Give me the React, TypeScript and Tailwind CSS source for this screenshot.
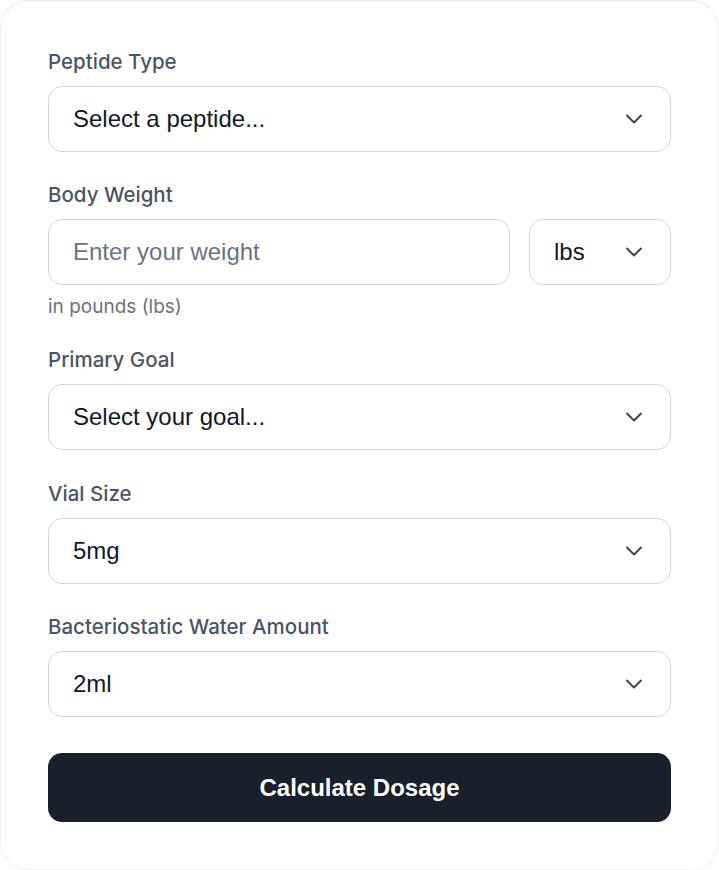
import { ChevronDown } from "lucide-react";

const LABEL = "block text-[20.5px] leading-6 font-medium text-[#4b5563] font-['Inter',sans-serif] mb-3";
const BOX = "flex h-[66px] items-center rounded-[14px] border border-[#d1d5db] bg-white pl-6 pr-[22px] text-[24px] font-['Liberation_Sans',Arial,sans-serif]";

function SelectBox ({ value, className = "" }: { value: string; className?: string }) {
    return (
        <div className={`${BOX} ${className}`}>
            <span className="flex-1 text-[#111827]">{value}</span>
            <ChevronDown size={28} strokeWidth={1.6} className="text-[#374151]" />
        </div>
    );
}

export default function App () {
    return (
        <div className="min-h-[870px] w-full bg-white">
            <div className="flex min-h-[870px] flex-col rounded-[28px] border border-[#f0f0f0] border-t-[#e5e7eb] bg-white px-[47px] pt-[49px]">
                <label className={LABEL}>Peptide Type</label>
                <SelectBox value="Select a peptide..." />

                <label className={`${LABEL} mt-[31px]`}>Body Weight</label>
                <div className="flex gap-[19px]">
                    <div className={`${BOX} flex-1`}>
                        <span className="text-[#6b7280]">Enter your weight</span>
                    </div>
                    <SelectBox value="lbs" className="w-[142px]" />
                </div>
                <p className="mt-3 text-[19px] leading-5 text-[#6b7280] font-['Inter',sans-serif]">
                    in pounds (lbs)
                </p>

                <label className={`${LABEL} mt-[31px]`}>Primary Goal</label>
                <SelectBox value="Select your goal..." />

                <label className={`${LABEL} mt-[32px]`}>Vial Size</label>
                <SelectBox value="5mg" />

                <label className={`${LABEL} mt-[31px]`}>Bacteriostatic Water Amount</label>
                <SelectBox value="2ml" />

                <button className="mt-[36px] h-[69px] w-full rounded-[14px] bg-[#1a1f2c] text-[24px] font-bold text-white font-['Liberation_Sans',Arial,sans-serif]">
                    Calculate Dosage
                </button>
            </div>
        </div>
    );
}
